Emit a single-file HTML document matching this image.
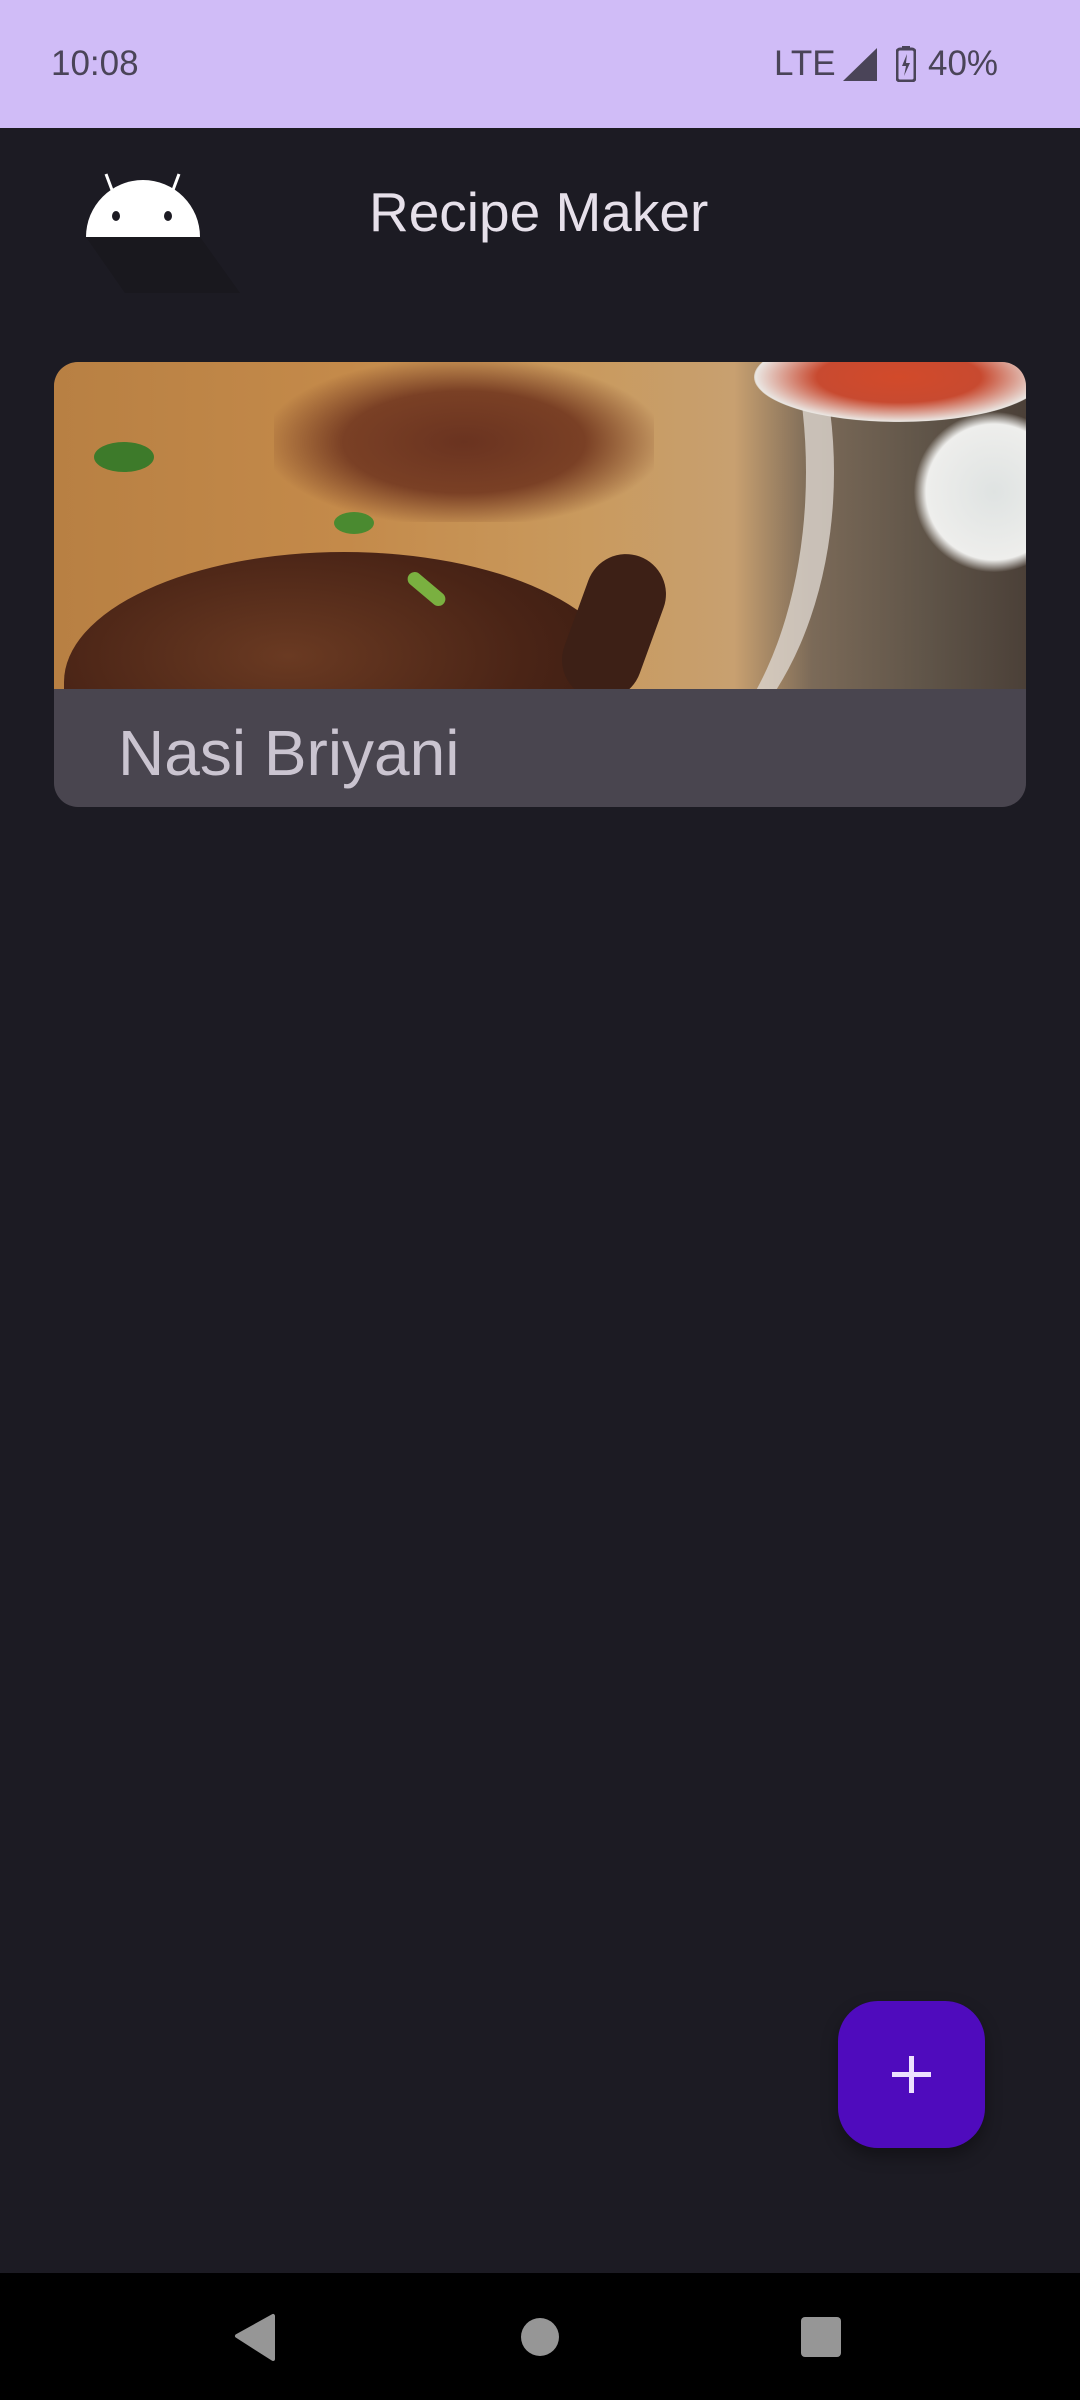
<!DOCTYPE html>
<html><head><meta charset="utf-8"><style>
*{margin:0;padding:0;box-sizing:border-box}
body{width:1080px;height:2400px;background:#1c1b23;font-family:"Liberation Sans",Roboto,sans-serif;position:relative;overflow:hidden}
.sb{position:absolute;left:0;top:0;width:1080px;height:128px;background:#d0bcf7;color:#4a4458;font-size:35px}
.abs{position:absolute}
</style></head><body>
<div class="sb">
 <div class="abs" style="left:51px;top:44px">10:08</div>
 <div class="abs" style="left:774px;top:44px">LTE</div>
 <svg class="abs" style="left:843px;top:48px" width="36" height="34"><polygon points="34,0 34,33 0,33" fill="#4a4458"/></svg>
 <svg class="abs" style="left:896px;top:46px" width="20" height="36"><rect x="1" y="3" width="18" height="32" rx="3" fill="none" stroke="#4a4458" stroke-width="3"/><rect x="6" y="0" width="8" height="4" fill="#4a4458"/><path d="M11 8 L6 20 H10 L8 30 L14 17 H10 Z" fill="#4a4458"/></svg>
 <div class="abs" style="left:928px;top:44px">40%</div>
</div>
<svg class="abs" style="left:80px;top:168px" width="180" height="140">
 <polygon points="6,69 120,69 160,125 45,125" fill="#19181d" opacity="0.8"/>
 <path d="M6 69 A57 57 0 0 1 120 69 Z" fill="#fff"/>
 <line x1="26" y1="6" x2="35" y2="30" stroke="#fff" stroke-width="3"/>
 <line x1="99" y1="6" x2="90" y2="30" stroke="#fff" stroke-width="3"/>
 <ellipse cx="36" cy="48" rx="4" ry="5" fill="#1c1b23"/>
 <ellipse cx="88" cy="48" rx="4" ry="5" fill="#1c1b23"/>
</svg>
<div class="abs" style="left:369px;top:180px;font-size:55px;color:#e6e0ea">Recipe Maker</div>
<div class="abs" style="left:54px;top:362px;width:972px;height:445px;border-radius:24px;overflow:hidden;background:#49454f">
 <div style="position:relative;height:327px;overflow:hidden;background:linear-gradient(90deg,#b88043 0%,#c48a4a 30%,#c99a5e 55%,#c8a070 70%,#7b6a58 78%,#5f5448 90%,#4b4038 100%)">
  <div class="abs" style="left:220px;top:0;width:380px;height:160px;background:radial-gradient(ellipse at center,#6a3320 0%,#7a4025 45%,rgba(150,90,50,0) 75%)"></div>
  <div class="abs" style="left:380px;top:-200px;width:400px;height:620px;border-radius:50%;border-right:28px solid #ddd6cf;opacity:.8"></div>
  <div class="abs" style="left:700px;top:-30px;width:290px;height:90px;border-radius:50%;background:radial-gradient(ellipse,#d24a2a 0%,#c84a30 40%,#eae6e2 70%,rgba(0,0,0,0) 72%)"></div>
  <div class="abs" style="left:860px;top:50px;width:160px;height:160px;border-radius:50%;background:radial-gradient(circle,#dfe3e2 0%,#eeeeec 60%,rgba(0,0,0,0) 71%)"></div>
  <div class="abs" style="left:10px;top:190px;width:560px;height:260px;border-radius:50% 50% 0 0;background:radial-gradient(ellipse at 40% 40%,#6a3a22 0%,#4a2416 50%,#3a1c12 80%)"></div>
  <div class="abs" style="left:520px;top:190px;width:80px;height:150px;border-radius:40px;background:#3d2016;transform:rotate(20deg)"></div>
  <div class="abs" style="left:40px;top:80px;width:60px;height:30px;background:#3d7a2a;border-radius:50%"></div>
  <div class="abs" style="left:280px;top:150px;width:40px;height:22px;background:#4a8a30;border-radius:50%"></div>
  <div class="abs" style="left:350px;top:220px;width:45px;height:14px;background:#7ab040;border-radius:7px;transform:rotate(40deg)"></div>
 </div>
 <div class="abs" style="left:64px;top:354px;font-size:64px;color:#cac4d0">Nasi Briyani</div>
</div>
<div class="abs" style="left:838px;top:2001px;width:147px;height:147px;border-radius:40px;background:#4f0bbd;box-shadow:0 8px 16px rgba(0,0,0,.35)">
 <div class="abs" style="left:54px;top:71px;width:39px;height:5px;background:#ede0ff"></div>
 <div class="abs" style="left:71px;top:55px;width:5px;height:37px;background:#ede0ff"></div>
</div>
<div class="abs" style="left:0;top:2273px;width:1080px;height:127px;background:#000">
 <svg class="abs" style="left:230px;top:40px" width="50" height="50"><path d="M7 23 L43 3 V46 Z" fill="#969696" stroke="#969696" stroke-width="4" stroke-linejoin="round"/></svg>
 <div class="abs" style="left:521px;top:45px;width:38px;height:38px;border-radius:50%;background:#969696"></div>
 <div class="abs" style="left:801px;top:44px;width:40px;height:40px;border-radius:4px;background:#969696"></div>
</div>
</body></html>
